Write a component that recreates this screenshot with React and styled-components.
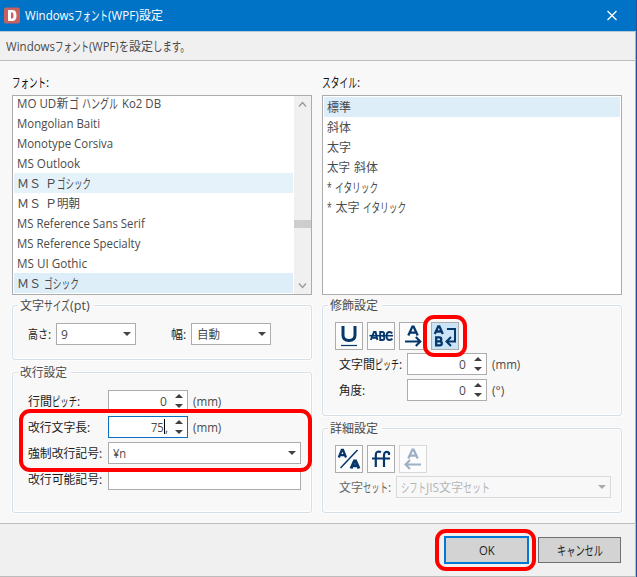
import React, { useLayoutEffect, useRef, useState } from "react";
import styled, { createGlobalStyle, css } from "styled-components";

const Global = createGlobalStyle`
  *, *::before, *::after { box-sizing: border-box; }
  body {
    margin: 0;
    overflow: hidden;
    font-family: "Open Sans", "Noto Sans CJK JP", sans-serif;
    font-size: 12px;
    line-height: 20px;
    color: #4a4a4a;
  }
`;

/* ---------- text ---------- */
const Line = styled.span`
  display: inline-flex;
  height: 20px;
  white-space: pre;
  color: ${(p) => p.$color || "inherit"};
`;
const RunBox = styled.span`
  display: block;
  flex: none;
  width: ${(p) => p.$w}px;
  height: 20px;
  margin-left: ${(p) => p.$gap || 0}px;
`;
const RunText = styled.span`
  display: block;
  width: max-content;
  height: 20px;
  font-size: ${(p) => (p.$kana ? 13 : 12)}px;
  line-height: ${(p) => (p.$kana ? 18 : 20)}px;
  transform-origin: 0 50%;
`;

const isKana = (t) => /^[\u3040-\u30ff。]+$/.test(t);

function Run({ text, width, gap }) {
  const ref = useRef(null);
  const [scale, setScale] = useState(1);
  useLayoutEffect(() => {
    setScale(width / ref.current.offsetWidth);
  }, [text, width]);
  return (
    <RunBox $w={width} $gap={gap}>
      <RunText ref={ref} $kana={isKana(text)} style={{ transform: `scaleX(${scale})` }}>
        {text}
      </RunText>
    </RunBox>
  );
}

/* runs: [text, width, gap before] */
const Text = ({ runs, color }) => (
  <Line $color={color}>
    {runs.map(([t, w, g], i) => <Run key={i} text={t} width={w} gap={g} />)}
  </Line>
);

/* ---------- window ---------- */
const Window = styled.div`
  position: relative;
  display: flex;
  flex-direction: column;
  width: 637px;
  height: 577px;
  background: #f8f8f8;
  border-right: 1px solid #24509c;
`;
const TitleBar = styled.header`
  display: flex;
  align-items: center;
  flex: none;
  height: 31px;
  padding: 0 18px 0 4px;
  background: #0173c7;
  color: #fff;
`;
const TitleText = styled.div`
  flex: 1;
  height: 20px;
  margin: 1px 0 0 5px;
`;
const SubHeader = styled.div`
  flex: none;
  height: 30px;
  padding: 5px 0 0 6px;
  background: #f0f0f0;
  border-top: 1px solid #b5cbdc;
  border-right: 1px solid #b5b5b5;
  border-bottom: 1px solid #bcbcbc;
`;
const Body = styled.main`
  display: grid;
  grid-template-columns: 300px 300px;
  column-gap: 10px;
  flex: none;
  height: 462px;
  padding: 12px 0 0 12px;
  border-right: 1px solid #b5b5b5;
`;
const Column = styled.section`
  display: flex;
  flex-direction: column;
`;
const Caption = styled.div`
  height: 22px;
  flex: none;
  color: #111;
`;
const Footer = styled.footer`
  display: flex;
  align-items: center;
  justify-content: flex-end;
  gap: 9px;
  flex: 1;
  padding: 0 14px 1px 0;
  background: #f0f0f0;
  border: solid #bcbcbc;
  border-width: 1px 1px 1px 0;
`;

/* ---------- lists ---------- */
const ListBox = styled.div`
  display: flex;
  flex: none;
  height: 200px;
  overflow: hidden;
  background: #fff;
  border: 1px solid #acacac;
`;
const Items = styled.div`
  flex: 1;
  padding: 0 1px;
  margin-top: ${(p) => p.$offset}px;
`;
const Item = styled.div`
  height: 20px;
  padding: 1px 0 0 3px;
  background: ${(p) => p.$bg || "transparent"};
`;
const ScrollBar = styled.div`
  display: flex;
  flex-direction: column;
  align-items: center;
  justify-content: space-between;
  width: 17px;
  padding: 5px 0;
  background: #f0f0f0;
`;
const Thumb = styled.div`
  width: 17px;
  height: 8px;
  margin-top: 91px;
  margin-bottom: 34px;
  background: #cdcdcd;
`;

/* ---------- groups and fields ---------- */
const Group = styled.div`
  display: flex;
  flex-direction: column;
  flex: none;
  height: ${(p) => p.$h}px;
  margin-top: ${(p) => p.$mt}px;
  padding-left: ${(p) => p.$pl}px;
  border: 1px solid #d5dfe5;
  border-radius: 3px;
  box-shadow: inset 0 0 0 1px #fff, 0 0 0 1px #fdfdfd;
`;
const Legend = styled.div`
  align-self: flex-start;
  flex: none;
  height: 20px;
  margin: -10px 0 ${(p) => p.$mb}px ${(p) => p.$ml}px;
  padding: 0 4px 0 2px;
  background: #f8f8f8;
`;
const Row = styled.div`
  display: flex;
  align-items: center;
  flex: none;
  height: 22px;
  margin-bottom: 4px;
`;
const Label = styled.div`
  flex: none;
  width: ${(p) => p.$w}px;
  height: 22px;
  padding-top: 2px;
  margin-left: ${(p) => p.$ml || 0}px;
  color: ${(p) => (p.$dim ? "#666" : "#1c1c1c")};
`;
const Unit = styled.div`
  height: 22px;
  padding-top: 2px;
  margin-left: 5px;
`;
const Field = styled.div`
  display: flex;
  align-items: center;
  justify-content: space-between;
  flex: none;
  width: ${(p) => p.$w}px;
  height: 22px;
  padding: 0 4px 0 ${(p) => p.$pl ?? 4}px;
  background: #fff;
  border: 1px solid #acacac;
  ${(p) => p.$focus && css`border-color: #0a6fc0;`}
  ${(p) => p.$disabled && css`background: #f8f8f8; border-color: #d9d9d9; color: #b5b5b5;`}
`;
const Value = styled.div`
  height: 20px;
  padding-top: 1px;
`;
const NumberValue = styled(Value)`
  display: flex;
  justify-content: flex-end;
  flex: 1;
  margin-right: ${(p) => p.$mr}px;
`;
const Caret = styled.span`
  width: 1px;
  height: 15px;
  margin: 1px 0 0 0;
  background: #000;
`;
const ToolRow = styled.div`
  display: flex;
  gap: 4px;
  height: 28px;
  margin: 0 0 3px -4px;
`;
const ToolButton = styled.div`
  width: 28px;
  height: 28px;
  background: ${(p) => (p.$active ? "#cce4f7" : "#fcfcfc")};
  border: 1px solid ${(p) => (p.$disabled ? "#d9d9d9" : "#acacac")};
  svg { display: block; opacity: ${(p) => (p.$disabled ? 0.38 : 1)}; }
`;
const Button = styled.div`
  display: flex;
  align-items: center;
  justify-content: center;
  width: ${(p) => p.$w}px;
  height: ${(p) => (p.$primary ? 28 : 26)}px;
  padding-top: 2px;
  background: #d3d3d3;
  border: ${(p) => (p.$primary ? "2px solid #0078d7" : "1px solid #707070")};
  color: #222;
`;

const Highlight = styled.div`
  position: absolute;
  left: ${(p) => p.$x}px;
  top: ${(p) => p.$y}px;
  width: ${(p) => p.$w}px;
  height: ${(p) => p.$h}px;
  border: 4px solid #fe0000;
  border-radius: 11px;
`;

/* ---------- icons ---------- */
const Logo = () => (
  <svg width="16" height="17" viewBox="0 0 16 17">
    <rect width="16" height="16" y=".5" rx="2" fill="#c9605f" />
    <path fillRule="evenodd" fill="#fff" d="M4 3h4.3c2.7 0 4.2 1.8 4.2 5.5s-1.5 5.5-4.2 5.5H4zM7 5.5v6h1.1c1 0 1.4-.9 1.4-3s-.4-3-1.4-3z" />
  </svg>
);
const Close = () => (
  <svg width="12" height="12" viewBox="0 0 12 12">
    <path d="M1.5 1l9 9M10.5 1l-9 9" stroke="#fff" strokeWidth="1.3" />
  </svg>
);
const Chevron = ({ up }) => (
  <svg width="9" height="7" viewBox="0 0 9 7">
    <path d={up ? "M1 5.5L4.5 1.5 8 5.5" : "M1 1.5L4.5 5.5 8 1.5"} fill="none" stroke="#999" strokeWidth="1.3" />
  </svg>
);
const Down = ({ color = "#444" }) => (
  <svg width="8" height="4" viewBox="0 0 8 4"><path d="M0 0h8L4 4z" fill={color} /></svg>
);
const SpinArrows = () => (
  <svg width="8" height="14" viewBox="0 0 8 14">
    <path d="M0 4L4 0l4 4zM0 10h8l-4 4z" fill="#3f3f3f" />
  </svg>
);
const Icon = ({ children }) => (
  <svg width="26" height="26" viewBox="0 0 26 26" fill="none" stroke="#05376b" strokeWidth="2">{children}</svg>
);
const icons = {
  underline: <Icon><path d="M7 3v9c0 3.8 2 5.5 6 5.5s6-1.7 6-5.5V3" strokeWidth="3" /><path d="M5 22.5h16" strokeWidth="1.2" /></Icon>,
  strike: (
    <Icon>
      <path d="M2.8 17L6 9h1.6l1.8 8M4.5 14.7H9M12.2 9h2.2c2.2 0 2.2 3.8 0 4 2.6 0 2.6 4 0 4h-2.2zM24.3 10.4c-.9-1-1.8-1.4-2.8-1.4-2 0-2.9 1.5-2.9 4s.9 4 2.9 4c1.1 0 2.1-.4 2.8-1.4" strokeWidth="1.9" />
      <path d="M1.5 12.7H25" strokeWidth="1.6" />
    </Icon>
  ),
  pitch: <Icon><path d="M8.3 12.5L12.4 3.6h1.2l4.1 8.9M9.8 9.7h6.4" strokeWidth="2.3" /><path d="M5 18.5h15M15.8 14l4.5 4.5-4.5 4.5" strokeWidth="2.1" /></Icon>,
  wrap: (
    <Icon>
      <path d="M2.8 11L6.2 3.3h1.2l3.4 7.7M4.2 8.5h5.2" strokeWidth="2.3" />
      <path d="M4.2 14.4v8h3.5c2.8 0 2.8-4.1 0-4.1H4.2h3.2c2.5 0 2.5-3.9 0-3.9z" strokeWidth="2.3" />
      <path d="M15 6h8v12.5h-8M19 14l-4.5 4.5L19 23" />
    </Icon>
  ),
  slash: (
    <Icon>
      <path d="M2.8 11.5L5.8 4h1.2l3 7.5M4 9.2h5" strokeWidth="2.3" />
      <path d="M4.5 22L21.5 4" strokeWidth="1.5" />
      <path d="M15 22.5l3.4-7.5h1.2l3.4 7.5M16.4 19.8h5.2" strokeWidth="3" />
    </Icon>
  ),
  ligature: <Icon><path d="M7.8 21V9c0-3.3 2-4 5.2-3M16 21V9c0-3.4 2.8-4 5-2.2V9M4 12.5h18" strokeWidth="2.2" /></Icon>,
  back: <Icon><path d="M8.3 12.5L12.4 3.6h1.2l4.1 8.9M9.8 9.7h6.4" strokeWidth="2.3" /><path d="M21 18.5H6M10 14l-4.5 4.5L10 23" strokeWidth="2.1" /></Icon>,
};

/* ---------- data ---------- */
const fonts = [
  { runs: [["MO UD", 39.5], ["新", 12], ["ゴ", 10], ["ハングル", 36, 3.5], ["Ko2 DB", 39, 4]] },
  { runs: [["Mongolian Baiti", 83]] },
  { runs: [["Monotype Corsiva", 96]] },
  { runs: [["MS Outlook", 63]] },
  { runs: [["ＭＳ", 24], ["Ｐ", 12, 4], ["ゴシック", 34]], bg: "#e5f2fa" },
  { runs: [["ＭＳ", 24], ["Ｐ", 12, 4], ["明朝", 23]] },
  { runs: [["MS Reference Sans Serif", 128]] },
  { runs: [["MS Reference Specialty", 123]] },
  { runs: [["MS UI Gothic", 70]] },
  { runs: [["ＭＳ", 24], ["ゴシック", 35, 3]], bg: "#deeef9" },
];
const styles = [
  [["標準", 24]],
  [["斜体", 24]],
  [["太字", 24]],
  [["太字", 23], ["斜体", 24, 4]],
  [["*", 5], ["イタリック", 43, 3]],
  [["*", 5], ["太字", 24, 3.5], ["イタリック", 43, 3]],
];

const Spin = ({ value, focus }) => (
  <Field $w={80} $focus={focus}>
    <NumberValue $mr={focus ? 7 : 8}>
      {focus
        ? <><Text runs={[["75", 13]]} /><Caret /><Text runs={[[",", 3]]} /></>
        : <Text runs={[[value, 7]]} />}
    </NumberValue>
    <SpinArrows />
  </Field>
);
const Combo = ({ width, runs, pl, disabled }) => (
  <Field $w={width} $pl={pl} $disabled={disabled}>
    <Value><Text runs={runs} /></Value>
    <Down color={disabled ? "#aaa" : "#444"} />
  </Field>
);
const mm = [["(mm)", 28]];

export default function App() {
  return (
    <>
      <Global />
      <Window>
        <TitleBar>
          <Logo />
          <TitleText><Text runs={[["Windows", 49], ["フォント", 34], ["(WPF)", 31], ["設定", 24]]} /></TitleText>
          <Close />
        </TitleBar>
        <SubHeader>
          <Text runs={[["Windows", 49], ["フォント", 34], ["(WPF)", 30], ["を", 10], ["設定", 24], ["します。", 37]]} />
        </SubHeader>
        <Body>
          <Column>
            <Caption><Text runs={[["フォント", 34], [":", 3]]} /></Caption>
            <ListBox>
              <Items $offset={-3}>
                {fonts.map((f, i) => <Item key={i} $bg={f.bg}><Text runs={f.runs} /></Item>)}
              </Items>
              <ScrollBar><Chevron up /><Thumb /><Chevron /></ScrollBar>
            </ListBox>
            <Group $h={55} $mt={10} $pl={15}>
              <Legend $ml={-10} $mb={7}><Text runs={[["文字", 24], ["サイズ", 26], ["(pt)", 20]]} /></Legend>
              <Row>
                <Label $w={28}><Text runs={[["高さ", 20], [":", 3]]} /></Label>
                <Combo width={80} runs={[["9", 7]]} />
                <Label $w={20} $ml={35}><Text runs={[["幅", 12], [":", 3]]} /></Label>
                <Combo width={80} pl={5} runs={[["自動", 23]]} />
              </Row>
            </Group>
            <Group $h={141} $mt={12} $pl={15}>
              <Legend $ml={-10} $mb={7}><Text runs={[["改行設定", 47]]} /></Legend>
              <Row>
                <Label $w={80}><Text runs={[["行間", 24], ["ピッチ", 25], [":", 3]]} /></Label>
                <Spin value="0" /><Unit><Text runs={mm} /></Unit>
              </Row>
              <Row>
                <Label $w={80}><Text runs={[["改行文字長", 59], [":", 3]]} /></Label>
                <Spin focus /><Unit><Text runs={mm} /></Unit>
              </Row>
              <Row>
                <Label $w={80}><Text runs={[["強制改行記号", 71], [":", 3]]} /></Label>
                <Combo width={193} runs={[["¥n", 13]]} />
              </Row>
              <Row>
                <Label $w={80}><Text runs={[["改行可能記号", 71], [":", 3]]} /></Label>
                <Field $w={193} />
              </Row>
            </Group>
          </Column>
          <Column>
            <Caption><Text runs={[["スタイル", 35], [":", 3]]} /></Caption>
            <ListBox>
              <Items $offset={1}>
                {styles.map((runs, i) => <Item key={i} $bg={i === 0 && "#deeef9"}><Text runs={runs} /></Item>)}
              </Items>
            </ListBox>
            <Group $h={111} $mt={10} $pl={16}>
              <Legend $ml={-11} $mb={6}><Text runs={[["修飾設定", 48]]} /></Legend>
              <ToolRow>
                <ToolButton>{icons.underline}</ToolButton>
                <ToolButton>{icons.strike}</ToolButton>
                <ToolButton>{icons.pitch}</ToolButton>
                <ToolButton $active>{icons.wrap}</ToolButton>
              </ToolRow>
              <Row>
                <Label $w={68}><Text runs={[["文字間", 36], ["ピッチ", 24], [":", 3]]} /></Label>
                <Spin value="0" /><Unit><Text runs={mm} /></Unit>
              </Row>
              <Row>
                <Label $w={68}><Text runs={[["角度", 23], [":", 3]]} /></Label>
                <Spin value="0" /><Unit><Text runs={[["(°)", 12]]} /></Unit>
              </Row>
            </Group>
            <Group $h={85} $mt={12} $pl={16}>
              <Legend $ml={-11} $mb={6}><Text runs={[["詳細設定", 48]]} /></Legend>
              <ToolRow>
                <ToolButton>{icons.slash}</ToolButton>
                <ToolButton>{icons.ligature}</ToolButton>
                <ToolButton $disabled>{icons.back}</ToolButton>
              </ToolRow>
              <Row>
                <Label $w={57} $dim><Text runs={[["文字", 24], ["セット", 25], [":", 3]]} /></Label>
                <Combo width={215} disabled runs={[["シフト", 25], ["JIS", 13], ["文字", 24], ["セット", 27]]} />
              </Row>
            </Group>
          </Column>
        </Body>
        <Footer>
          <Button $w={85} $primary><Text runs={[["OK", 16]]} /></Button>
          <Button $w={83}><Text runs={[["キャンセル", 46]]} /></Button>
        </Footer>
        <Highlight $x={19} $y={409} $w={293} $h={63} />
        <Highlight $x={423} $y={315} $w={44} $h={42} />
        <Highlight $x={435} $y={529} $w={101} $h={42} />
      </Window>
    </>
  );
}
